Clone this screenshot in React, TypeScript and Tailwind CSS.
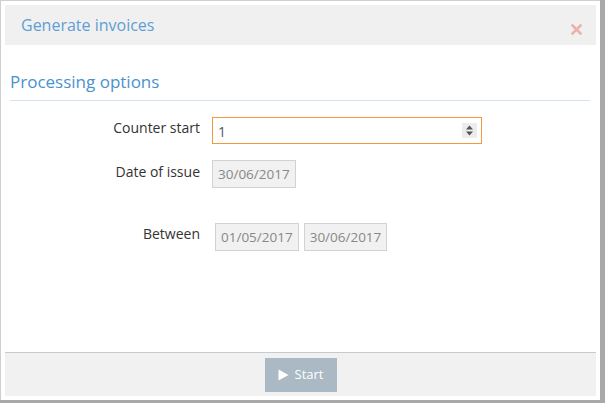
import React from "react";

export default function App() {
  const font = { fontFamily: '"Open Sans", "Noto Sans", sans-serif' };
  return (
    <div className="w-[605px] h-[403px] bg-[#a8a8a8] overflow-hidden" style={font}>
      <div className="w-[600px] h-[400px] bg-white border-l border-t border-[#cfcfcf] p-[4px] flex flex-col">
        <div className="h-[40px] bg-[#f0f0f0] flex items-center justify-between pl-[16px] pr-[14px] shrink-0">
          <span className="text-[16px] text-[#5f9ed3] leading-none">Generate invoices</span>
          <svg width="11" height="11" viewBox="0 0 11 11" className="mt-[8px]">
            <path d="M1.5 1.5 L9.5 9.5 M9.5 1.5 L1.5 9.5" stroke="#eeb0aa" strokeWidth="2.6" strokeLinecap="square" />
          </svg>
        </div>
        <div className="flex-1 px-[5px]">
          <div className="mt-[25px] text-[17px] text-[#4a92cd] leading-[24px] pb-[6px] border-b border-[#d3e3ef] mr-[1px]">
            Processing options
          </div>
          <div className="mt-[16px] flex items-start">
            <div className="w-[190px] text-right text-[14px] text-[#333] leading-[20px] pt-[1px]">Counter start</div>
            <div className="ml-[12px] w-[270px] h-[27px] border border-[#f39a3e] flex items-center justify-between pl-[5px] pr-[4px]">
              <span className="text-[14px] text-[#555] mt-[2px]">1</span>
              <div className="w-[15px] h-[15px] bg-[#ececec] flex items-center justify-center">
                <svg width="9" height="11" viewBox="0 0 9 11">
                  <path d="M4.5 0.5 L8 4.5 L1 4.5 Z" fill="#555" />
                  <path d="M1 6.5 L8 6.5 L4.5 10.5 Z" fill="#555" />
                </svg>
              </div>
            </div>
          </div>
          <div className="mt-[16px] flex items-start">
            <div className="w-[190px] text-right text-[14px] text-[#333] leading-[20px] pt-[2px]">Date of issue</div>
            <div className="ml-[12px] h-[28px] px-[5px] border border-[#d2d2d2] bg-[#f1f1f1] text-[13.5px] text-[#888] flex items-center">30/06/2017</div>
          </div>
          <div className="mt-[35px] flex items-start">
            <div className="w-[190px] text-right text-[14px] text-[#333] leading-[20px] pt-[1px]">Between</div>
            <div className="ml-[15px] flex gap-[5px]">
              <div className="h-[28px] px-[5px] border border-[#d2d2d2] bg-[#f1f1f1] text-[13.5px] text-[#888] flex items-center">01/05/2017</div>
              <div className="h-[28px] px-[5px] border border-[#d2d2d2] bg-[#f1f1f1] text-[13.5px] text-[#888] flex items-center">30/06/2017</div>
            </div>
          </div>
        </div>
        <div className="h-[44px] bg-[#f1f1f1] border-t border-[#cacaca] flex items-center justify-center shrink-0">
          <div className="w-[72px] h-[34px] bg-[#aab9c3] flex items-center justify-center gap-[6px] text-white text-[13px]">
            <svg width="11" height="12" viewBox="0 0 11 12">
              <path d="M0.5 0.5 L10.5 6 L0.5 11.5 Z" fill="#fff" />
            </svg>
            <span>Start</span>
          </div>
        </div>
      </div>
    </div>
  );
}
